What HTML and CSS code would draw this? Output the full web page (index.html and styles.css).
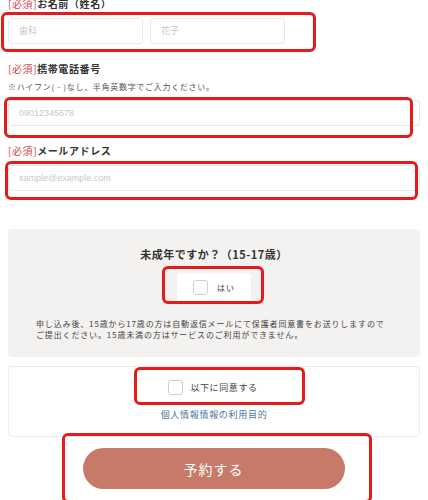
FILE: index.html
```html
<!DOCTYPE html>
<html lang="ja">
<head>
<meta charset="utf-8">
<link rel="stylesheet" href="styles.css">
</head>
<body>
<div class="page">
  <div class="field field-first">
    <div class="label"><span class="req">[必須]</span>お名前（姓名）</div>
    <div class="name-row">
      <div class="input name-input">歯科</div>
      <div class="input name-input">花子</div>
    </div>
  </div>
  <div class="field">
    <div class="label"><span class="req">[必須]</span>携帯電話番号</div>
    <div class="note">※ハイフン( - )なし、半角英数字でご入力ください。</div>
    <div class="input wide tel">09012345678</div>
  </div>
  <div class="field">
    <div class="label"><span class="req">[必須]</span>メールアドレス</div>
    <div class="input wide mail">sample@example.com</div>
  </div>

  <div class="minor-box">
    <div class="minor-title">未成年ですか？（15-17歳）</div>
    <div class="yes-card"><span class="checkbox"></span><span class="yes-text">はい</span></div>
    <p class="minor-note">申し込み後、15歳から17歳の方は自動返信メールにて保護者同意書をお送りしますのでご提出ください。15歳未満の方はサービスのご利用ができません。</p>
  </div>

  <div class="agree-box">
    <div class="agree-row"><span class="checkbox"></span><span class="agree-text">以下に同意する</span></div>
    <div class="agree-link">個人情報情報の利用目的</div>
  </div>

  <div class="btn-wrap"><div class="submit">予約する</div></div>

  <div class="mark m1"></div>
  <div class="mark m2"></div>
  <div class="mark m3"></div>
  <div class="mark m4"></div>
  <div class="mark m5"></div>
  <div class="mark m6"></div>
</div>
</body>
</html>
```

FILE: styles.css
```css
* { box-sizing: border-box; }
html, body { margin: 0; padding: 0; background: #fff; }
body {
  font-family: "Noto Sans CJK JP", "Noto Sans", sans-serif;
  color: #333;
  overflow: hidden;
  height: 500px;
}
.page {
  position: relative;
  padding: 0 8px;
  display: flex;
  flex-direction: column;
}
.field { display: flex; flex-direction: column; }
.field-first { margin-top: -2px; }
.field + .field { margin-top: 19px; }
.label {
  font-size: 10px;
  line-height: 12px;
  height: 12px;
  font-weight: 700;
  letter-spacing: 0.6px;
  color: #333;
}
.req { color: #d0474d; font-weight: 400; }
.name-row { display: flex; gap: 7px; margin-top: 8px; }
.input {
  height: 26px;
  border: 1px solid #e8e8e8;
  border-radius: 3px;
  background: #fff;
  padding-left: 10px;
  font-size: 9px;
  line-height: 24px;
  color: #c8c8c8;
}
.name-input { width: 135px; }
.wide { width: 100%; font-family: "Liberation Sans", Arial, sans-serif; }
.tel { margin-top: 7px; }
.mail { margin-top: 8px; }
.note {
  margin-top: 6px;
  font-size: 8px;
  line-height: 12px;
  letter-spacing: 0.7px;
  color: #555;
}
.minor-box {
  margin-top: 38px;
  background: #f4f2f0;
  border-radius: 4px;
  padding: 18px 28px 17px;
  display: flex;
  flex-direction: column;
  align-items: center;
}
.minor-title {
  font-size: 11px;
  line-height: 14px;
  font-weight: 700;
  letter-spacing: 0.5px;
  color: #333;
}
.yes-card {
  margin-top: 12px;
  width: 74px;
  height: 29px;
  background: #fff;
  border-radius: 3px;
  display: flex;
  align-items: center;
  padding-left: 16px;
  gap: 9px;
}
.checkbox {
  width: 15px;
  height: 15px;
  border: 1px solid #cfcfcf;
  border-radius: 3px;
  background: #fff;
  flex: none;
}
.yes-text { font-size: 8px; letter-spacing: 1px; color: #444; }
.minor-note {
  margin: 16px 0 0;
  align-self: stretch;
  font-size: 8px;
  line-height: 11px;
  letter-spacing: 0.85px;
  color: #444;
}
.agree-box {
  margin-top: 9px;
  border: 1px solid #ececec;
  border-radius: 4px;
  padding: 13px 0 15px;
  display: flex;
  flex-direction: column;
  align-items: center;
}
.agree-row {
  display: flex;
  align-items: center;
  gap: 7px;
  height: 15px;
  margin-left: -2px;
}
.agree-text { font-size: 9px; letter-spacing: 0.6px; color: #444; }
.agree-link {
  margin-top: 14px;
  font-size: 9px;
  line-height: 12px;
  letter-spacing: 0.7px;
  color: #4f74a0;
}
.btn-wrap { margin-top: 11px; display: flex; justify-content: center; }
.submit {
  width: 262px;
  height: 41px;
  margin-left: -1px;
  border-radius: 21px;
  background: #c87a68;
  color: #fff;
  font-size: 14px;
  letter-spacing: 1px;
  display: flex;
  align-items: center;
  justify-content: center;
}
.mark {
  position: absolute;
  border: 3px solid #e51b1b;
  border-radius: 6px;
}
.m1 { left: 1px; top: 12px; width: 315px; height: 40px; }
.m2 { left: 4px; top: 97px; width: 409px; height: 41px; }
.m3 { left: 5px; top: 161px; width: 413px; height: 39px; }
.m4 { left: 162px; top: 266px; width: 102px; height: 38px; }
.m5 { left: 134px; top: 367px; width: 171px; height: 38px; }
.m6 { left: 62px; top: 433px; width: 310px; height: 70px; }
```
